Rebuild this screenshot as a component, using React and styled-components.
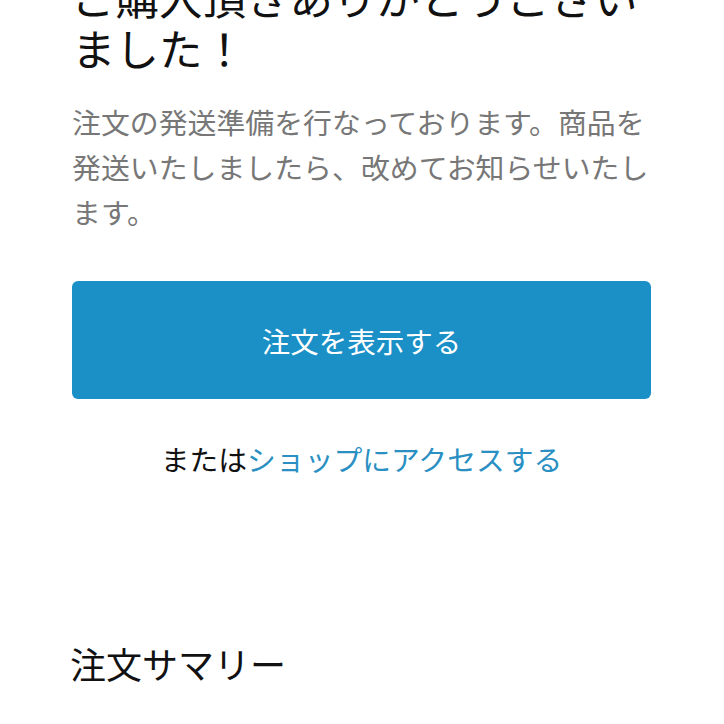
import React from 'react'
import styled, { createGlobalStyle } from 'styled-components'

const GlobalStyle = createGlobalStyle`
  html, body {
    margin: 0;
    padding: 0;
    background: #fff;
  }
  body {
    font-family: 'Noto Sans CJK JP', 'Noto Sans', sans-serif;
    color: #111;
    overflow: hidden;
  }
`

// page is shown scrolled down a little, so the title's first line is cut at the top
const Page = styled.main`
  padding: 0 73px 0 72px;
  margin-top: -29px;
`

const Title = styled.h1`
  margin: 0;
  font-size: 43.5px;
  font-weight: 400;
  line-height: 51px;
  color: #111;
`

const Lead = styled.p`
  margin: 26px 0 0;
  font-size: 28.9px;
  line-height: 45px;
  color: #777;
`

const PrimaryButton = styled.a`
  display: flex;
  align-items: center;
  justify-content: center;
  margin-top: 47px;
  height: 118px;
  border-radius: 6px;
  background: #1a90c7;
  color: #fff;
  font-size: 28.5px;
  text-decoration: none;
`

const AltLine = styled.p`
  margin: 37px 0 0;
  text-align: center;
  font-size: 28.8px;
  line-height: 45px;
  color: #111;
`

const ShopLink = styled.a`
  color: #2a8fc2;
  text-decoration: none;
`

const SectionTitle = styled.h2`
  margin: 159px 0 0 -2px;
  font-size: 36px;
  font-weight: 400;
  line-height: 47px;
  color: #111;
`

const App = () => {
  return (
    <>
      <GlobalStyle />
      <Page>
        <Title>ご購入頂きありがとうございました！</Title>
        <Lead>
          注文の発送準備を行なっております。商品を発送いたしましたら、改めてお知らせいたします。
        </Lead>
        <PrimaryButton href="#">注文を表示する</PrimaryButton>
        <AltLine>
          または<ShopLink href="#">ショップにアクセスする</ShopLink>
        </AltLine>
        <SectionTitle>注文サマリー</SectionTitle>
      </Page>
    </>
  )
}

export default App
